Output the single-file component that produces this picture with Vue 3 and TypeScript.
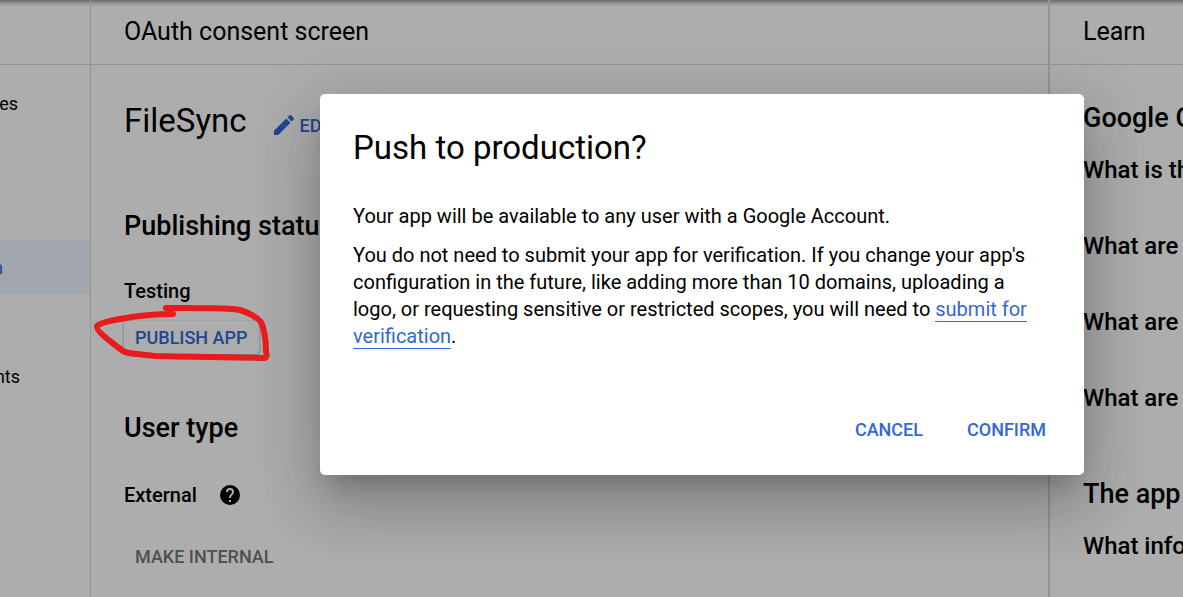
<script setup lang="ts">
interface NavItem {
  label: string
  kind: string
}

interface LearnGroup {
  title: string
  questions: string[]
}

const navItems: NavItem[] = [
  { label: 'es', kind: 'services' },
  { label: 'n', kind: 'consent' },
  { label: 'nts', kind: 'agreements' },
]

const learnGroups: LearnGroup[] = [
  { title: 'Google C', questions: ['What is th', 'What are', 'What are', 'What are'] },
  { title: 'The app', questions: ['What info'] },
]
</script>

<template>
  <div class="console">
    <nav class="sidebar" aria-label="APIs and services">
      <div class="bar"></div>
      <a v-for="item in navItems" :key="item.kind" href="#" class="nav-item" :class="item.kind">
        <span class="nav-label">{{ item.label }}</span>
      </a>
    </nav>

    <main class="main">
      <header class="bar"><h1 class="bar-title">OAuth consent screen</h1></header>
      <div class="content">
        <div class="app-row">
          <h2 class="app-name">FileSync</h2>
          <button type="button" class="text-button edit">
            <svg class="pencil" viewBox="3 3 18 18" aria-hidden="true">
              <path d="M3 17.25V21h3.75L17.81 9.94l-3.75-3.75L3 17.25zM20.71 7.04a1 1 0 0 0 0-1.41l-2.34-2.34a1 1 0 0 0-1.41 0l-1.83 1.83 3.75 3.75 1.83-1.83z" />
            </svg>
            <span>ED</span>
          </button>
        </div>
        <h3 class="section status">Publishing statu</h3>
        <p class="value testing">Testing</p>
        <button type="button" class="text-button publish">PUBLISH APP</button>
        <h3 class="section user-type">User type</h3>
        <p class="value external">
          External
          <svg class="help" viewBox="2 2 20 20" aria-hidden="true">
            <path d="M12 2a10 10 0 1 0 0 20 10 10 0 0 0 0-20zm1 17h-2v-2h2v2zm2.07-7.75-.9.92C13.45 12.9 13 13.5 13 15h-2v-.5c0-1.1.45-2.1 1.17-2.83l1.24-1.26c.37-.36.59-.86.59-1.41a2 2 0 1 0-4 0H8a4 4 0 1 1 8 0c0 .88-.36 1.68-.93 2.25z" />
          </svg>
        </p>
        <button type="button" class="text-button internal" disabled>MAKE INTERNAL</button>
      </div>
    </main>

    <aside class="learn">
      <header class="bar"><h2 class="bar-title">Learn</h2></header>
      <section v-for="group in learnGroups" :key="group.title" class="group">
        <h3 class="section">{{ group.title }}</h3>
        <ul class="questions">
          <li v-for="(question, i) in group.questions" :key="i">{{ question }}</li>
        </ul>
      </section>
    </aside>

    <div class="scrim">
      <div class="dialog" role="dialog" aria-modal="true" aria-labelledby="dialog-title">
        <h2 id="dialog-title" class="dialog-title">Push to production?</h2>
        <p class="lead">Your app will be available to any user with a Google Account.</p>
        <p class="details">
          You do not need to submit your app for verification. If you change your app's
          configuration in the future, like adding more than 10 domains, uploading a logo, or
          requesting sensitive or restricted scopes, you will need to
          <a href="#" class="link">submit for verification</a>.
        </p>
        <div class="actions">
          <button type="button" class="text-button">CANCEL</button>
          <button type="button" class="text-button">CONFIRM</button>
        </div>
      </div>
    </div>

    <svg class="marker" viewBox="90 300 184 66" aria-hidden="true">
      <path d="M173 314C155 314 136 316 120 319C108 321 99 324 97 326C95 330 111 342 123 351C127 354 140 354 155 356C190 357 230 357 264 358C267 358 267 355 266 351C266 341 264 329 261 322C257 317 247 312 240 310C225 307 208 309 190 308L166 308" />
    </svg>
  </div>
</template>

<style>
body {
  margin: 0;
}
</style>

<style scoped>
.console {
  position: relative;
  display: grid;
  grid-template-columns: 90px minmax(0, 1fr) 135px;
  height: 100vh;
  overflow: hidden;
  background: #fff;
  color: #000;
  font-family: Roboto, "Liberation Sans", sans-serif;
  font-size: 20px;
}

h1,
h2,
h3,
p,
ul {
  margin: 0;
  padding: 0;
}

.bar {
  display: flex;
  align-items: center;
  box-sizing: border-box;
  height: 65px;
  border-bottom: 1px solid #dadada;
  background: linear-gradient(rgba(0, 0, 0, 0.38), rgba(0, 0, 0, 0.1) 4px, transparent 7px);
}

.bar-title {
  font-size: 25px;
  font-weight: 400;
  line-height: 32px;
}

.sidebar,
.learn {
  overflow: hidden;
}

.nav-item {
  display: flex;
  align-items: center;
  height: 54px;
  color: #000;
  font-size: 18px;
  text-decoration: none;
}

.nav-label {
  display: flex;
  justify-content: flex-end;
}

.services {
  margin-top: 11px;
}

.services .nav-label {
  width: 18px;
}

.consent {
  margin-top: 110px;
  background: #eef3ff;
  color: #3367d6;
}

.consent .nav-label {
  width: 3px;
}

.agreements {
  margin-top: 55px;
}

.agreements .nav-label {
  width: 20px;
}

.main {
  border-left: 1px solid #dadada;
}

.main .bar,
.learn .bar {
  padding-left: 33px;
}

.content {
  padding: 35px 33px 0;
}

.app-row {
  display: flex;
  align-items: center;
  height: 40px;
}

.app-name {
  font-size: 33px;
  font-weight: 400;
}

.section {
  font-size: 27px;
  font-weight: 500;
  line-height: 32px;
  white-space: nowrap;
}

.value {
  display: flex;
  align-items: center;
  gap: 23px;
  font-weight: 500;
  line-height: 28px;
}

.text-button {
  display: block;
  height: 33px;
  padding: 0 11px;
  border: 0;
  border-radius: 3px;
  background: transparent;
  color: #3367d6;
  font-family: inherit;
  font-size: 18px;
  font-weight: 500;
  white-space: nowrap;
}

.edit {
  display: flex;
  align-items: center;
  gap: 6px;
  margin: 10px 0 0 16px;
}

.pencil {
  width: 20px;
  height: 20px;
  fill: currentColor;
}

.status {
  margin-top: 70px;
}

.testing {
  margin-top: 35px;
}

.publish {
  margin-top: 16px;
  box-shadow: 0 1px 3px rgba(0, 0, 0, 0.4);
}

.user-type {
  margin-top: 58px;
}

.external {
  margin-top: 37px;
}

.help {
  width: 20px;
  height: 20px;
}

.internal {
  margin-top: 31px;
  color: #757575;
}

.learn {
  border-left: 2px solid #dadada;
  white-space: nowrap;
}

.group {
  padding: 37px 0 0 33px;
}

.group + .group {
  padding-top: 66px;
}

.questions {
  display: grid;
  gap: 48px;
  margin-top: 22px;
  font-size: 24px;
  font-weight: 500;
  line-height: 28px;
  list-style: none;
}

.scrim {
  position: absolute;
  inset: 0;
  display: flex;
  align-items: flex-start;
  padding: 94px 99px 0 320px;
  background: rgba(0, 0, 0, 0.32);
}

.dialog {
  flex: 1;
  padding: 32px 27px 29px 33px;
  border-radius: 5px;
  background: #fff;
  box-shadow:
    0 16px 22px -10px rgba(0, 0, 0, 0.2),
    0 36px 57px 4px rgba(0, 0, 0, 0.14),
    0 13px 69px 12px rgba(0, 0, 0, 0.12);
}

.dialog-title {
  margin-bottom: 33px;
  font-size: 33px;
  font-weight: 400;
  line-height: 44px;
}

.lead,
.details {
  line-height: 27px;
}

.details {
  margin: 12px 12px 0 0;
}

.link {
  border-bottom: 1px solid #3367d6;
  color: #3367d6;
  text-decoration: none;
}

.actions {
  display: flex;
  justify-content: flex-end;
  gap: 22px;
  margin-top: 63px;
}

.marker {
  position: absolute;
  left: 90px;
  top: 300px;
  width: 184px;
  height: 66px;
  fill: none;
  stroke: #e81c1c;
  stroke-width: 6px;
  stroke-linecap: round;
  stroke-linejoin: round;
}
</style>
